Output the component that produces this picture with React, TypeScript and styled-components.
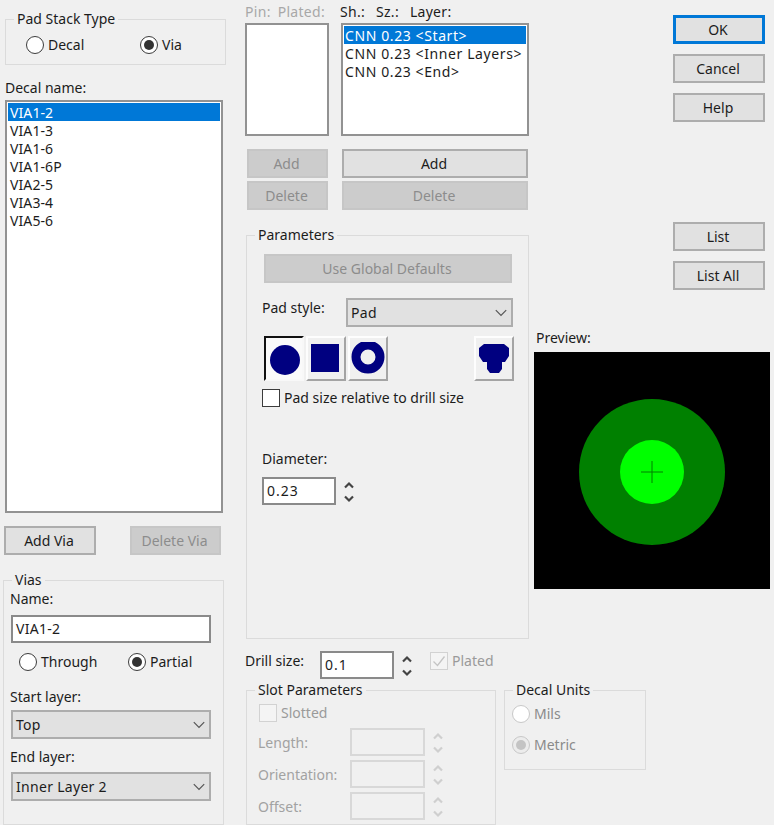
import React from "react";
import styled, { createGlobalStyle } from "styled-components";

const Global = createGlobalStyle`
  html, body { margin: 0; padding: 0; background: #f0f0f0; }
  body { font-family: "Noto Sans", "Open Sans", sans-serif; font-size: 14px; color: #1c1c1c; }
`;

const Page = styled.div`
  width: 774px; height: 825px; overflow: hidden; display: flex; background: #f0f0f0; line-height: 18px;
`;
const LeftColumn = styled.div`
  width: 245px; flex: none; display: flex; flex-direction: column; align-items: flex-start;
`;
const CenterColumn = styled.div`
  flex: 1; display: flex; flex-direction: column; align-items: flex-start;
`;
const TopArea = styled.div`
  display: flex; height: 680px; align-items: flex-start;
`;
const MiddleColumn = styled.div`
  width: 289px; flex: none; display: flex; flex-direction: column; align-items: flex-start;
`;
const RightColumn = styled.div`
  flex: none; width: 240px; display: flex; flex-direction: column; align-items: flex-start;
`;
const BottomArea = styled.div`
  display: flex; gap: 8px; align-items: flex-start; margin-top: 1px; margin-left: 1px;
`;

const Group = styled.fieldset<{ $w: number; $h: number; $x?: number; $y?: number }>`
  box-sizing: border-box; margin: ${p => p.$y ?? 0}px 0 0 ${p => p.$x ?? 0}px; padding: 0; min-width: 0;
  width: ${p => p.$w}px; height: ${p => p.$h}px; border: 1px solid #dbdbdb; flex: none;
`;
const Legend = styled.legend`
  margin-left: 8px; padding: 0 3px; height: 18px; line-height: 18px; white-space: nowrap;
`;

const Label = styled.div<{ $x?: number; $y?: number; $off?: boolean }>`
  margin: ${p => p.$y ?? 0}px 0 0 ${p => p.$x ?? 0}px; height: 18px; line-height: 18px; white-space: nowrap;
  color: ${p => (p.$off ? "#a2a2a2" : "#1c1c1c")};
`;

const RadioRow = styled.div<{ $x: number; $y: number }>`
  display: flex; margin: ${p => p.$y}px 0 0 ${p => p.$x}px;
`;
const RadioItem = styled.div<{ $w?: number; $off?: boolean }>`
  display: flex; align-items: center; gap: 4px; height: 18px; width: ${p => (p.$w ? `${p.$w}px` : "auto")};
  color: ${p => (p.$off ? "#8a8a8a" : "#1c1c1c")};
`;
const RadioMark = styled.span<{ $on?: boolean; $off?: boolean }>`
  box-sizing: border-box; width: 18px; height: 18px; border-radius: 50%; flex: none; display: flex;
  align-items: center; justify-content: center;
  background: ${p => (p.$off && p.$on ? "#ececec" : "#fff")};
  border: 1.5px solid ${p => (p.$off ? "#c8c8c8" : "#3c3c3c")};
  &::after { content: ""; width: 10px; height: 10px; border-radius: 50%;
    background: ${p => (p.$on ? (p.$off ? "#c4c4c4" : "#333") : "transparent")}; }
`;
const Radio = ({ label, on, off, w }: { label: string; on?: boolean; off?: boolean; w?: number }) => (
  <RadioItem $w={w} $off={off}><RadioMark $on={on} $off={off} />{label}</RadioItem>
);

const ListBox = styled.div<{ $w: number; $h: number; $x?: number; $y?: number }>`
  box-sizing: border-box; width: ${p => p.$w}px; height: ${p => p.$h}px; flex: none;
  margin: ${p => p.$y ?? 0}px 0 0 ${p => p.$x ?? 0}px;
  background: #fff; border: 2px solid #929292; padding: 1px;
`;
const ListRow = styled.div<{ $sel?: boolean; $track?: number; $pad?: number }>`
  height: 18px; line-height: 20px; padding-left: ${p => p.$pad ?? 2}px; white-space: nowrap;
  letter-spacing: ${p => p.$track ?? 0.1}px;
  background: ${p => (p.$sel ? "#0078d7" : "transparent")};
  color: ${p => (p.$sel ? "#fff" : "#1c1c1c")};
`;

const Btn = styled.div<{ $w: number; $x?: number; $y?: number; $off?: boolean; $def?: boolean }>`
  box-sizing: border-box; width: ${p => p.$w}px; height: 29px; flex: none; display: flex;
  align-items: center; justify-content: center; padding-right: 2px;
  margin: ${p => p.$y ?? 0}px 0 0 ${p => p.$x ?? 0}px;
  background: ${p => (p.$off ? "#cccccc" : "#e1e1e1")};
  border: ${p => (p.$def ? "3px solid #0078d7" : `2px solid ${p.$off ? "#c6c6c6" : "#adadad"}`)};
  color: ${p => (p.$off ? "#8c8c8c" : "#1c1c1c")};
`;

const Combo = styled.div<{ $w: number; $x?: number; $y?: number }>`
  box-sizing: border-box; width: ${p => p.$w}px; height: 29px; flex: none; display: flex;
  align-items: center; justify-content: space-between; padding: 0 4px 0 3px; letter-spacing: 0.3px;
  margin: ${p => p.$y ?? 0}px 0 0 ${p => p.$x ?? 0}px;
  background: #e1e1e1; border: 2px solid #adadad;
`;
const Chevron = () => (
  <svg width="12" height="8" viewBox="0 0 12 8"><path d="M0.8 1.2 L6 6.4 L11.2 1.2" fill="none" stroke="#555" strokeWidth="1.2" /></svg>
);

const Edit = styled.div<{ $w: number; $off?: boolean }>`
  box-sizing: border-box; width: ${p => p.$w}px; height: 28px; flex: none; display: flex; align-items: center;
  padding-left: 3px; letter-spacing: 1px;
  background: ${p => (p.$off ? "#f0f0f0" : "#fff")};
  border: 2px solid ${p => (p.$off ? "#d8d8d8" : "#8a8a8a")};
`;
const ViaNameEdit = styled.div`
  box-sizing: border-box; width: 200px; height: 28px; display: flex; align-items: center; margin: 7px 0 0 7px;
  padding-left: 3px; letter-spacing: 0.3px; background: #fff; border: 2px solid #8a8a8a;
`;
const EditWrap = styled.div<{ $x?: number; $y?: number }>`
  display: flex; align-items: center; gap: 6px; margin: ${p => p.$y ?? 0}px 0 0 ${p => p.$x ?? 0}px;
`;
const Spinner = ({ off }: { off?: boolean }) => (
  <svg width="14" height="26" viewBox="0 0 14 26" style={{ flex: "none" }}>
    <path d="M3 9.5 L7 5.5 L11 9.5 M3 18.5 L7 22.5 L11 18.5" fill="none" stroke={off ? "#cfcfcf" : "#444"} strokeWidth="2.2" />
  </svg>
);

const CheckRow = styled.div<{ $x?: number; $y?: number; $off?: boolean }>`
  display: flex; align-items: center; gap: 4px; height: 18px; white-space: nowrap;
  margin: ${p => p.$y ?? 0}px 0 0 ${p => p.$x ?? 0}px;
  color: ${p => (p.$off ? "#9a9a9a" : "#1c1c1c")};
`;
const CheckBox = styled.span<{ $off?: boolean }>`
  box-sizing: border-box; width: 18px; height: 18px; flex: none; display: flex; align-items: center; justify-content: center;
  background: ${p => (p.$off ? "#f4f4f4" : "#fff")};
  border: 1.5px solid ${p => (p.$off ? "#d2d2d2" : "#3c3c3c")};
`;

const SplitRow = styled.div<{ $x?: number; $y?: number; $gap?: number }>`
  display: flex; gap: ${p => p.$gap ?? 0}px; align-items: center;
  margin: ${p => p.$y ?? 0}px 0 0 ${p => p.$x ?? 0}px;
`;
const HeaderRow = styled.div`
  display: flex; height: 18px; margin-top: 3px; white-space: nowrap;
`;
const HeadCell = styled.div<{ $w: number; $off?: boolean; $words: number }>`
  width: ${p => p.$w}px; color: ${p => (p.$off ? "#a8a8a8" : "#1c1c1c")}; letter-spacing: 0.3px;
  word-spacing: ${p => p.$words}px;
`;
const FieldRow = styled.div<{ $y?: number }>`
  display: flex; align-items: center; margin: ${p => p.$y ?? 0}px 0 0 0;
`;
const FieldName = styled.div`
  width: 92px; margin: 2px 0 0 11px; color: #a2a2a2; white-space: nowrap;
`;
const PadStyleRow = styled.div`
  display: flex; align-items: center; margin: 15px 0 0 15px; height: 29px;
`;
const PadStyleLabel = styled.div`
  width: 84px; margin-top: -9px; white-space: nowrap;
`;
const IconRow = styled.div`
  display: flex; gap: 2px; margin: 9px 0 0 17px;
`;
const IconBtn = styled.div<{ $down?: boolean; $push?: number }>`
  box-sizing: border-box; width: 40px; height: 45px; flex: none; display: flex; align-items: center; justify-content: center;
  margin-left: ${p => p.$push ?? 0}px; background: ${p => (p.$down ? "#fafafa" : "#f0f0f0")};
  border-style: solid; border-width: 2px;
  border-color: ${p => (p.$down ? "#111 #f8f8f8 #f8f8f8 #111" : "#fdfdfd #a4a4a4 #a4a4a4 #fdfdfd")};
`;
const Preview = styled.svg`
  display: block; width: 236px; height: 237px; margin: 5px 0 0 0; border: none; flex: none;
`;
const ButtonStack = styled.div`
  display: flex; flex-direction: column; gap: 10px; margin: 15px 0 0 139px;
`;

const navy = "#000080";

export default function App() {
  return (
    <Page>
      <Global />
      <LeftColumn>
        <Group $w={221} $h={55} $x={5} $y={10}>
          <Legend>Pad Stack Type</Legend>
          <RadioRow $x={20} $y={8}>
            <Radio label="Decal" w={114} />
            <Radio label="Via" on />
          </RadioRow>
        </Group>
        <Label $x={5} $y={14}>Decal name:</Label>
        <ListBox $w={218} $h={413} $x={5} $y={3}>
          {["VIA1-2", "VIA1-3", "VIA1-6", "VIA1-6P", "VIA2-5", "VIA3-4", "VIA5-6"].map((v, i) => (
            <ListRow key={v} $sel={i === 0}>{v}</ListRow>
          ))}
        </ListBox>
        <SplitRow $x={4} $y={13} $gap={34}>
          <Btn $w={92}>Add Via</Btn>
          <Btn $w={91} $off>Delete Via</Btn>
        </SplitRow>
        <Group $w={221} $h={254} $x={3} $y={16}>
          <Legend>Vias</Legend>
          <Label $x={6} $y={1}>Name:</Label>
          <ViaNameEdit>VIA1-2</ViaNameEdit>
          <RadioRow $x={15} $y={10}>
            <Radio label="Through" w={109} />
            <Radio label="Partial" on />
          </RadioRow>
          <Label $x={6} $y={17}>Start layer:</Label>
          <Combo $w={200} $x={7} $y={4}>Top<Chevron /></Combo>
          <Label $x={6} $y={9}>End layer:</Label>
          <Combo $w={200} $x={7} $y={6}>Inner Layer 2<Chevron /></Combo>
        </Group>
      </LeftColumn>

      <CenterColumn>
        <TopArea>
          <MiddleColumn>
            <HeaderRow>
              <HeadCell $w={95} $off $words={3}>Pin: Plated:</HeadCell>
              <HeadCell $w={130} $words={7}>Sh.: Sz.: Layer:</HeadCell>
            </HeaderRow>
            <SplitRow $gap={12} $y={2}>
              <ListBox $w={84} $h={113} />
              <ListBox $w={188} $h={113}>
                <ListRow $sel $track={0.6} $pad={1}>CNN 0.23 &lt;Start&gt;</ListRow>
                <ListRow $track={0.6} $pad={1}>CNN 0.23 &lt;Inner Layers&gt;</ListRow>
                <ListRow $track={0.6} $pad={1}>CNN 0.23 &lt;End&gt;</ListRow>
              </ListBox>
            </SplitRow>
            <SplitRow $x={2} $y={13} $gap={14}>
              <Btn $w={81} $off>Add</Btn>
              <Btn $w={186}>Add</Btn>
            </SplitRow>
            <SplitRow $x={2} $y={3} $gap={14}>
              <Btn $w={81} $off>Delete</Btn>
              <Btn $w={186} $off>Delete</Btn>
            </SplitRow>
            <Group $w={283} $h={413} $x={1} $y={16}>
              <Legend>Parameters</Legend>
              <Btn $w={248} $x={17} $y={10} $off>Use Global Defaults</Btn>
              <PadStyleRow>
                <PadStyleLabel>Pad style:</PadStyleLabel>
                <Combo $w={167}>Pad<Chevron /></Combo>
              </PadStyleRow>
              <IconRow>
                <IconBtn $down>
                  <svg width="32" height="32" viewBox="0 0 32 32"><circle cx="17" cy="17" r="15" fill={navy} /></svg>
                </IconBtn>
                <IconBtn>
                  <svg width="30" height="30" viewBox="1 1 30 30"><rect width="29" height="29" fill={navy} /></svg>
                </IconBtn>
                <IconBtn>
                  <svg width="34" height="34" viewBox="0 0 34 34">
                    <circle cx="17" cy="15" r="12" fill="none" stroke={navy} strokeWidth="9" />
                  </svg>
                </IconBtn>
                <IconBtn $push={84}>
                  <svg width="30" height="30" viewBox="0 0 30 30">
                    <path d="M5 0 H25 L30 4 V12 L26 18 H23 V25 L20 29 H11 L8 25 V18 H4 L0 12 V4 Z" fill={navy} />
                  </svg>
                </IconBtn>
              </IconRow>
              <CheckRow $x={15} $y={8}><CheckBox />Pad size relative to drill size</CheckRow>
              <Label $x={15} $y={43}>Diameter:</Label>
              <EditWrap $x={15} $y={9}>
                <Edit $w={74}>0.23</Edit>
                <Spinner />
              </EditWrap>
            </Group>
            <SplitRow $y={12}>
              <Label $y={-8}>Drill size:</Label>
              <EditWrap $x={16}>
                <Edit $w={74}>0.1</Edit>
                <Spinner />
              </EditWrap>
              <CheckRow $x={16} $y={-8} $off>
                <CheckBox $off>
                  <svg width="14" height="14" viewBox="0 0 14 14"><path d="M1.5 7.5 L5.5 11.5 L12.5 2.5" fill="none" stroke="#c4c4c4" strokeWidth="1.3" /></svg>
                </CheckBox>
                Plated
              </CheckRow>
            </SplitRow>
          </MiddleColumn>
          <RightColumn>
            <ButtonStack>
              <Btn $w={92} $def>OK</Btn>
              <Btn $w={92}>Cancel</Btn>
              <Btn $w={92}>Help</Btn>
              <Btn $w={92} $y={90}>List</Btn>
              <Btn $w={92}>List All</Btn>
            </ButtonStack>
            <Label $x={2} $y={39}>Preview:</Label>
            <Preview viewBox="0 0 236 237">
              <rect width="236" height="237" fill="#000" />
              <circle cx="118" cy="120" r="73" fill="#008000" />
              <circle cx="118" cy="120" r="32" fill="#00ff00" />
              <path d="M107 120 H129 M118 109 V131" stroke="#008000" strokeWidth="1" />
            </Preview>
          </RightColumn>
        </TopArea>
        <BottomArea>
          <Group $w={250} $h={144}>
            <Legend>Slot Parameters</Legend>
            <CheckRow $x={12} $y={5} $off><CheckBox $off />Slotted</CheckRow>
            <FieldRow $y={6}>
              <FieldName>Length:</FieldName>
              <EditWrap><Edit $w={75} $off /><Spinner off /></EditWrap>
            </FieldRow>
            <FieldRow $y={4}>
              <FieldName>Orientation:</FieldName>
              <EditWrap><Edit $w={75} $off /><Spinner off /></EditWrap>
            </FieldRow>
            <FieldRow $y={4}>
              <FieldName>Offset:</FieldName>
              <EditWrap><Edit $w={75} $off /><Spinner off /></EditWrap>
            </FieldRow>
          </Group>
          <Group $w={142} $h={89}>
            <Legend>Decal Units</Legend>
            <RadioRow $x={7} $y={6}><Radio label="Mils" off /></RadioRow>
            <RadioRow $x={7} $y={13}><Radio label="Metric" on off /></RadioRow>
          </Group>
        </BottomArea>
      </CenterColumn>
    </Page>
  );
}
